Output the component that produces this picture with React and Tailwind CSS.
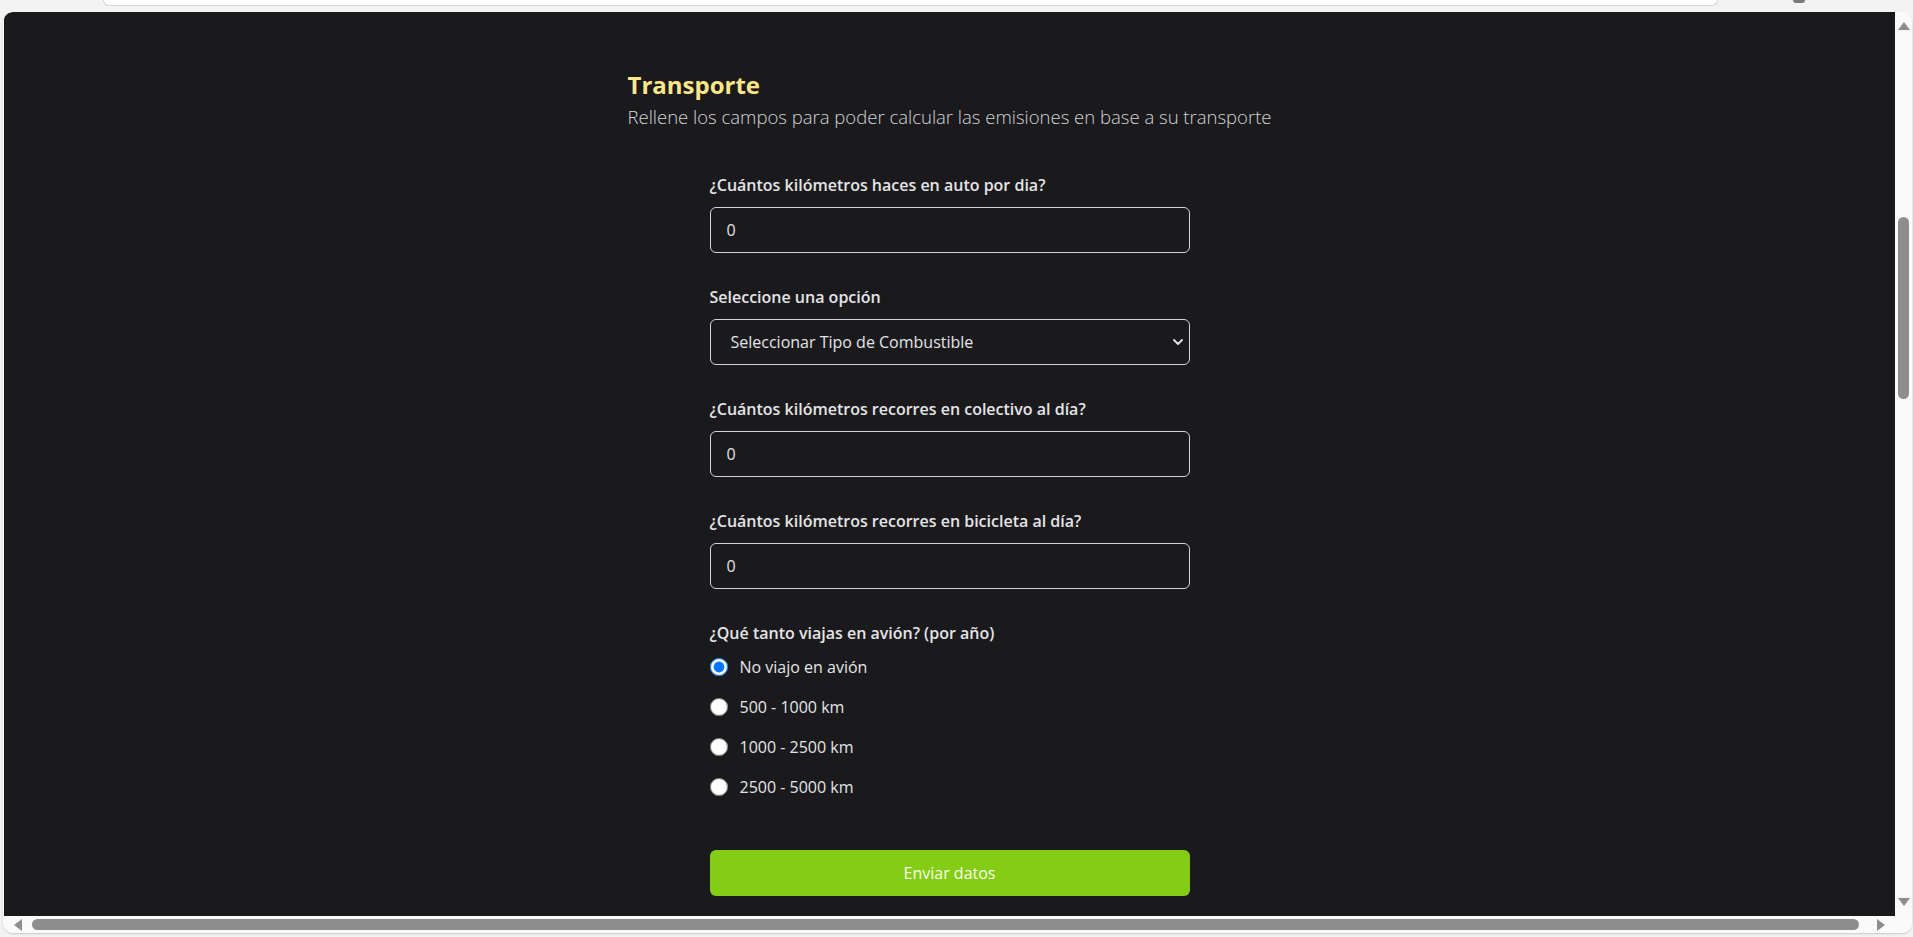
import React, { useState } from 'react';

const planeOptions = [
  { id: 'none', label: 'No viajo en avión' },
  { id: 'short', label: '500 - 1000 km' },
  { id: 'mid', label: '1000 - 2500 km' },
  { id: 'long', label: '2500 - 5000 km' },
];

const Field = ({ label, children }) => (
  <div className="flex flex-col">
    <label className="mb-[10px] h-6 text-base leading-6 font-semibold text-[#e4e4e7]">{label}</label>
    {children}
  </div>
);

const NumberInput = ({ value, onChange }) => (
  <input
    type="number"
    value={value}
    onChange={(e) => onChange(e.target.value)}
    className="h-[46px] w-full rounded-md border border-[#d4d4d8] bg-transparent px-4 text-base text-[#e4e4e7] outline-none"
  />
);

const Arrow = ({ dir }) => {
  // little scrollbar triangles
  const pts = {
    up: '0,8 6,0 12,8',
    down: '0,0 12,0 6,8',
    left: '8,0 8,12 0,6',
    right: '0,0 0,12 8,6',
  }[dir];
  const vertical = dir === 'up' || dir === 'down';
  return (
    <svg width={vertical ? 12 : 8} height={vertical ? 8 : 12} viewBox={vertical ? '0 0 12 8' : '0 0 8 12'}>
      <polygon points={pts} fill="#8d8d8d" />
    </svg>
  );
};

export default function App() {
  // --- State ---
  const [autoKm, setAutoKm] = useState('0');
  const [fuel, setFuel] = useState('');
  const [busKm, setBusKm] = useState('0');
  const [bikeKm, setBikeKm] = useState('0');
  const [plane, setPlane] = useState('none');

  return (
    <div className="h-screen w-full overflow-hidden bg-[#f3f3f3] font-['Open_Sans',sans-serif]">
      {/* top strip of the browser chrome */}
      <div className="flex h-[12px] overflow-hidden">
        <div className="ml-[103px] h-[6px] w-[1615px] rounded-b-[10px] border border-t-0 border-[#d6d6d6] bg-white" />
        <div className="ml-[75px] h-[3px] w-[12px] rounded-b-full bg-[#7a7a7a]" />
      </div>

      <div className="ml-[3px] mr-px flex h-[921px] flex-col overflow-hidden rounded-[10px] bg-white pl-px shadow-[0_1px_2px_rgba(0,0,0,0.18)]">
        <div className="flex min-h-0 flex-1">
          <main className="flex flex-1 flex-col items-center overflow-hidden rounded-tl-[8px] bg-[#1a1a1c] pt-[57px]">
            {/* Header */}
            <div className="w-[644px]">
              <h1 className="text-2xl font-bold text-[#fde68a]">Transporte</h1>
              <p className="mt-[2px] text-[18.5px] leading-7 font-light text-[#d4d4d8]">
                Rellene los campos para poder calcular las emisiones en base a su transporte
              </p>
            </div>

            {/* Form */}
            <form className="mt-[42px] flex w-[480px] flex-col gap-[32px]" onSubmit={(e) => e.preventDefault()}>
              <Field label="¿Cuántos kilómetros haces en auto por dia?">
                <NumberInput value={autoKm} onChange={setAutoKm} />
              </Field>

              <Field label="Seleccione una opción">
                <div className="relative">
                  <select
                    value={fuel}
                    onChange={(e) => setFuel(e.target.value)}
                    className="h-[46px] w-full appearance-none rounded-md border border-[#d4d4d8] bg-transparent pl-5 pr-8 text-base text-[#e4e4e7] outline-none"
                  >
                    <option value="">Seleccionar Tipo de Combustible</option>
                    <option value="nafta">Nafta</option>
                    <option value="diesel">Diesel</option>
                    <option value="gnc">GNC</option>
                  </select>
                  <svg
                    className="pointer-events-none absolute right-[7px] top-1/2 -translate-y-1/2"
                    width="10"
                    height="6"
                    viewBox="0 0 10 6"
                  >
                    <path d="M1 1l4 4 4-4" fill="none" stroke="#e4e4e7" strokeWidth="1.8" strokeLinecap="round" strokeLinejoin="round" />
                  </svg>
                </div>
              </Field>

              <Field label="¿Cuántos kilómetros recorres en colectivo al día?">
                <NumberInput value={busKm} onChange={setBusKm} />
              </Field>

              <Field label="¿Cuántos kilómetros recorres en bicicleta al día?">
                <NumberInput value={bikeKm} onChange={setBikeKm} />
              </Field>

              <Field label="¿Qué tanto viajas en avión? (por año)">
                <div className="flex flex-col gap-4">
                  {planeOptions.map((opt) => (
                    <label key={opt.id} className="flex h-6 items-center gap-3 text-base text-[#e4e4e7]">
                      <input
                        type="radio"
                        name="plane"
                        checked={plane === opt.id}
                        onChange={() => setPlane(opt.id)}
                        className="m-0 h-[18px] w-[18px]"
                      />
                      {opt.label}
                    </label>
                  ))}
                </div>
              </Field>

              <button
                type="submit"
                className="mt-[19px] h-[46px] w-full rounded-md bg-[#84cc16] text-base text-[#f7fee7]"
              >
                Enviar datos
              </button>
            </form>
          </main>

          {/* vertical scrollbar */}
          <div className="flex w-[17px] flex-col items-center bg-[#fafafa] py-[10px]">
            <Arrow dir="up" />
            <div className="mt-[187px] h-[182px] w-[11px] rounded-full bg-[#8d8d8d]" />
            <div className="flex-1" />
            <Arrow dir="down" />
          </div>
        </div>

        {/* horizontal scrollbar */}
        <div className="flex h-[17px]">
          <div className="flex flex-1 items-center bg-[#fafafa] px-[10px]">
            <Arrow dir="left" />
            <div className="ml-[10px] h-[11px] w-[1827px] rounded-full bg-[#8d8d8d]" />
            <div className="flex-1" />
            <Arrow dir="right" />
          </div>
          <div className="w-[17px] bg-[#fafafa]" />
        </div>
      </div>
    </div>
  );
}
